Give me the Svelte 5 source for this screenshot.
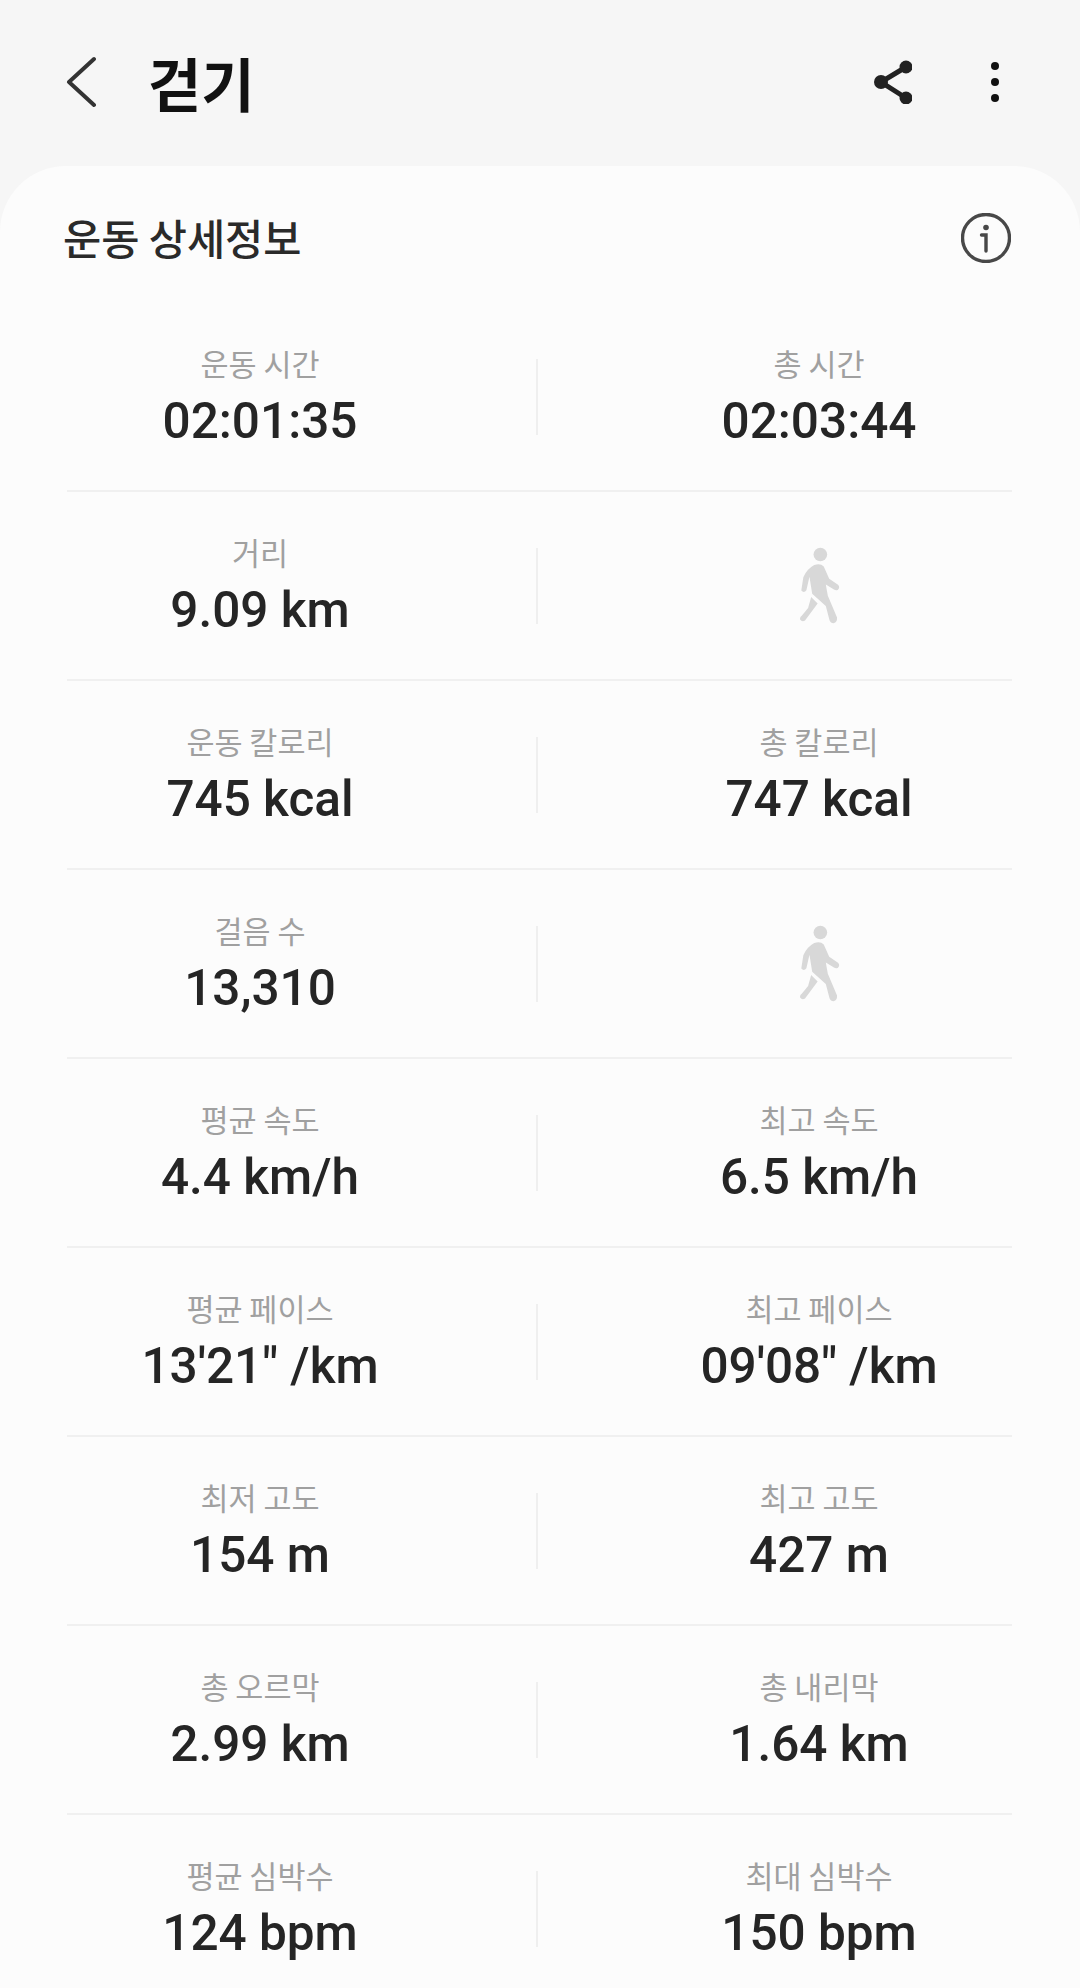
<script>
  const rows = [
    [{ label: '운동 시간', value: '02:01:35' }, { label: '총 시간', value: '02:03:44' }],
    [{ label: '거리', value: '9.09 km' }, { icon: true }],
    [{ label: '운동 칼로리', value: '745 kcal' }, { label: '총 칼로리', value: '747 kcal' }],
    [{ label: '걸음 수', value: '13,310' }, { icon: true }],
    [{ label: '평균 속도', value: '4.4 km/h' }, { label: '최고 속도', value: '6.5 km/h' }],
    [{ label: '평균 페이스', value: `13'21" /km` }, { label: '최고 페이스', value: `09'08" /km` }],
    [{ label: '최저 고도', value: '154 m' }, { label: '최고 고도', value: '427 m' }],
    [{ label: '총 오르막', value: '2.99 km' }, { label: '총 내리막', value: '1.64 km' }],
    [{ label: '평균 심박수', value: '124 bpm' }, { label: '최대 심박수', value: '150 bpm' }]
  ]
</script>

{#snippet cell(item)}
  {#if item.icon}
    <svg class="walker" viewBox="170 50 135 235" aria-hidden="true">
      <circle cx="240" cy="75" r="20" />
      <path d="M222 106 Q240 100 250 110 L266 146 L292 164 Q299 172 291 179 Q286 182 280 178 L256 163 L262 196 L289 260 Q290 274 279 277 Q270 277 267 268 L256 226 L216 190 L208 140 L199 180 Q192 189 184 181 L190 142 Q200 118 222 106 Z" />
      <path d="M213 200 L232 219 L195 269 Q186 275 180 265 Q180 258 186 254 L204 232 Z" />
    </svg>
  {:else}
    <span class="label">{item.label}</span>
    <span class="value">{item.value}</span>
  {/if}
{/snippet}

<div class="page">
  <header class="topbar">
    <svg class="back" viewBox="0 0 30 54" aria-hidden="true">
      <path d="M28 4 L3 27 L28 50" />
    </svg>
    <h1>걷기</h1>
    <svg class="share" viewBox="0 0 38 44" aria-hidden="true">
      <path class="line" d="M32 7 L7 22 L32 38" />
      <circle cx="32" cy="7" r="6.5" />
      <circle cx="7" cy="22" r="7" />
      <circle cx="32" cy="38" r="6.5" />
    </svg>
    <div class="more">
      <span></span><span></span><span></span>
    </div>
  </header>

  <main class="card">
    <div class="card-head">
      <h2>운동 상세정보</h2>
      <svg class="info" viewBox="0 0 50 50" aria-hidden="true">
        <circle class="ring" cx="25" cy="25" r="23.5" />
        <circle class="dot" cx="25" cy="14.5" r="2.8" />
        <path class="ring" d="M20.5 22 H25 V38" />
      </svg>
    </div>

    {#each rows as row}
      <section class="row">
        <div class="cell left">{@render cell(row[0])}</div>
        <div class="sep"></div>
        <div class="cell right">{@render cell(row[1])}</div>
      </section>
    {/each}
  </main>
</div>

<style>
  :global(body) {
    margin: 0;
    background: #f6f6f6;
  }
  .page {
    height: 1988px;
    overflow: hidden;
    background: #f6f6f6;
    font-family: Roboto, "Noto Sans CJK KR", sans-serif;
    color: #252525;
  }
  .topbar {
    height: 166px;
    box-sizing: border-box;
    display: flex;
    align-items: center;
    padding: 0 81px 0 66px;
  }
  .back {
    width: 30px;
    height: 54px;
    margin-top: -2px;
    fill: none;
    stroke: #333;
    stroke-width: 4;
    stroke-linecap: round;
    stroke-linejoin: round;
  }
  h1 {
    margin: -3px 0 0 52px;
    font: 700 58px/1 "Noto Sans CJK KR", sans-serif;
    color: #111;
    flex: 1;
  }
  .share {
    width: 38px;
    height: 44px;
    fill: #222;
    margin-right: 79px;
    margin-top: -2px;
  }
  .line {
    fill: none;
    stroke: #222;
    stroke-width: 5;
  }
  .more {
    display: flex;
    flex-direction: column;
    gap: 8px;
    margin-top: -3px;
  }
  .more span {
    width: 8px;
    height: 8px;
    border-radius: 50%;
    background: #111;
  }
  .card {
    background: #fcfcfc;
    border-radius: 66px 66px 0 0;
    min-height: 1900px;
  }
  .card-head {
    height: 137px;
    box-sizing: border-box;
    display: flex;
    align-items: flex-start;
    justify-content: space-between;
    padding: 48px 69px 0 63px;
  }
  h2 {
    margin: 0;
    font: 500 41.5px/46px "Noto Sans CJK KR", sans-serif;
    color: #2a2a2a;
  }
  .info {
    width: 50px;
    height: 50px;
    margin-top: -1px;
  }
  .ring {
    fill: none;
    stroke: #484848;
    stroke-width: 3.4;
    stroke-linecap: round;
  }
  .dot {
    fill: #484848;
  }
  .row {
    height: 189px;
    box-sizing: border-box;
    margin: 0 68px 0 67px;
    display: flex;
    align-items: center;
    border-bottom: 2px solid #f0f0f0;
  }
  .cell {
    flex: 1;
    display: flex;
    flex-direction: column;
    align-items: center;
    min-width: 0;
  }
  .left {
    padding-right: 83px;
  }
  .right {
    padding-left: 88px;
  }
  .sep {
    width: 2px;
    height: 76px;
    background: #efefef;
  }
  .label {
    font: 400 30.5px/40px "Noto Sans CJK KR", sans-serif;
    color: #a0a0a0;
    margin-bottom: 9px;
  }
  .value {
    font: 500 49.5px/58px Roboto, sans-serif;
    color: #252525;
  }
  .walker {
    width: 47px;
    height: 80px;
    fill: #d8d8d8;
  }
</style>
